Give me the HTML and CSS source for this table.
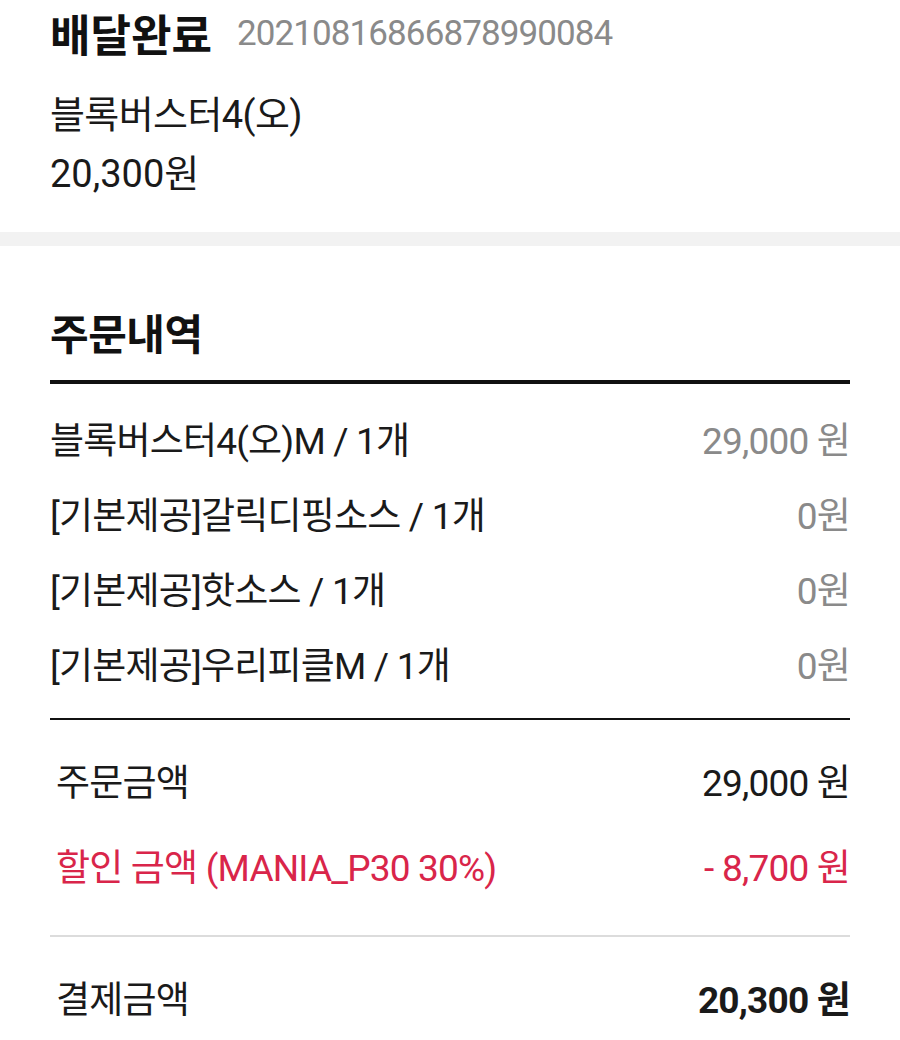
FILE: index.html
```html
<!DOCTYPE html>
<html lang="ko">
<head>
<meta charset="utf-8">
<link rel="stylesheet" href="styles.css">
</head>
<body>
<section class="summary">
  <div class="status-line">
    <span class="status">배달완료</span>
    <span class="order-no">20210816866878990084</span>
  </div>
  <div class="menu-name">블록버스터4(오)</div>
  <div class="menu-price">20,300원</div>
</section>
<div class="band"></div>
<section class="detail">
  <h2 class="detail-title">주문내역</h2>
  <div class="rule-thick"></div>
  <ul class="items">
    <li class="item"><span>블록버스터4(오)M / 1개</span><span class="item-price">29,000 원</span></li>
    <li class="item"><span>[기본제공]갈릭디핑소스 / 1개</span><span class="item-price">0원</span></li>
    <li class="item"><span>[기본제공]핫소스 / 1개</span><span class="item-price">0원</span></li>
    <li class="item"><span>[기본제공]우리피클M / 1개</span><span class="item-price">0원</span></li>
  </ul>
  <div class="rule-mid"></div>
  <div class="totals">
    <div class="total-row"><span class="label">주문금액</span><span>29,000 원</span></div>
    <div class="total-row discount"><span class="label">할인 금액 (MANIA_P30 30%)</span><span>- 8,700 원</span></div>
  </div>
  <div class="rule-light"></div>
  <div class="total-row final"><span class="label">결제금액</span><span class="final-price">20,300 원</span></div>
</section>
</body>
</html>
```
FILE: styles.css
```css
* { box-sizing: border-box; }
html, body { margin: 0; padding: 0; background: #fff; }
body {
  width: 900px;
  height: 1040px;
  overflow: hidden;
  font-family: "Roboto", "Noto Sans CJK KR", sans-serif;
  color: #1a1a1a;
}
.summary {
  padding: 0 50px 32px;
}
.status-line {
  height: 66px;
  display: flex;
  align-items: center;
  gap: 25px;
}
.status {
  font-size: 44px;
  font-weight: 700;
  letter-spacing: 0;
  color: #111;
}
.order-no {
  font-size: 35px;
  color: #8a8a8a;
  letter-spacing: -0.9px;
}
.menu-name, .menu-price {
  height: 59px;
  display: flex;
  align-items: center;
  font-size: 38px;
  letter-spacing: -0.6px;
}
.menu-name { margin-top: 16px; }
.menu-price { letter-spacing: 0; }
.band {
  height: 14px;
  background: #f2f2f2;
}
.detail {
  padding: 55px 50px 0;
}
.detail-title {
  margin: 0;
  height: 60px;
  display: flex;
  align-items: center;
  font-size: 42px;
  font-weight: 700;
  letter-spacing: -0.5px;
  color: #111;
}
.rule-thick {
  margin-top: 19px;
  height: 4px;
  background: #111;
}
.items {
  list-style: none;
  margin: 16px 0 0;
  padding: 0;
}
.item, .total-row {
  height: 75px;
  display: flex;
  align-items: center;
  justify-content: space-between;
  font-size: 37px;
  letter-spacing: -0.8px;
  color: #1a1a1a;
}
.item-price { color: #8a8a8a; }
.rule-mid {
  margin-top: 18px;
  height: 2px;
  background: #111;
}
.totals { margin-top: 17px; }
.total-row { height: 85px; }
.total-row .label { padding-left: 6px; }
.discount { color: #d9254a; }
.rule-light {
  margin-top: 28px;
  height: 2px;
  background: #dcdcdc;
}
.final { margin-top: 17px; }
.final-price { font-weight: 700; }
```
